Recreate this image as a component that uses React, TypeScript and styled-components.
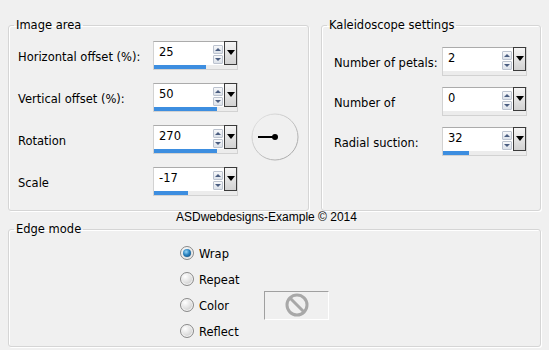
import React from "react";
import styled, { createGlobalStyle } from "styled-components";

const Global = createGlobalStyle`
  html, body { margin: 0; padding: 0; background: #f0f0f0; }
  body {
    width: 549px; height: 350px; overflow: hidden;
    font-family: "DejaVu Sans", Tahoma, sans-serif;
    font-size: 11.5px; color: #000;
  }
`;

const Window = styled.div`
  width: 549px;
  height: 350px;
  box-sizing: border-box;
  padding: 17px 0 0 8px;
  display: flex;
  flex-direction: column;
`;

const TopRow = styled.div`
  display: flex;
  gap: 12px;
  align-items: flex-start;
`;

const Group = styled.fieldset<{ $w: number; $h: number }>`
  margin: 0;
  padding: 0;
  min-width: 0;
  box-sizing: border-box;
  width: ${(p) => p.$w}px;
  height: ${(p) => p.$h}px;
  border: 1px solid #d5d5d5;
  border-radius: 3px;
  box-shadow: inset 1px 1px 0 #fff, 1px 1px 0 #fff;
`;

const Legend = styled.legend<{ $lh: number }>`
  margin-left: 5px;
  padding: 0 2px;
  line-height: ${(p) => p.$lh}px;
`;

const FormGrid = styled.div<{ $pl: number; $pt: number; $label: number; $gap: number }>`
  display: grid;
  grid-template-columns: ${(p) => p.$label}px 85px auto;
  grid-auto-rows: 29px;
  row-gap: ${(p) => p.$gap}px;
  column-gap: 0;
  padding: ${(p) => p.$pt}px 0 0 ${(p) => p.$pl}px;
  align-items: center;
`;

const Label = styled.div`
  grid-column: 1;
  line-height: 14px;
  padding-top: 3px;
  white-space: nowrap;
`;

const Spin = styled.div`
  grid-column: 2;
  box-sizing: border-box;
  width: 85px;
  height: 29px;
  border: 1px solid #d2d2d2;
  border-top-color: #ababab;
  background: #fff;
  display: grid;
  grid-template-columns: 1fr 10px 13px;
  grid-template-rows: 23px 4px;
  column-gap: 1px;
`;

const Value = styled.div`
  padding: 3px 0 0 5px;
  line-height: 14px;
`;

const Arrows = styled.div`
  display: flex;
  flex-direction: column;
  gap: 1px;
  padding-top: 3px;
`;

const ArrowBtn = styled.div<{ $up?: boolean }>`
  box-sizing: border-box;
  height: 9px;
  border: 1px solid #bcc3cf;
  border-radius: 1px;
  background: linear-gradient(#f7f8fa, #dce2ea);
  display: flex;
  align-items: center;
  justify-content: center;
  &::after {
    content: "";
    width: 0;
    height: 0;
    border-left: 3px solid transparent;
    border-right: 3px solid transparent;
    ${(p) =>
      p.$up
        ? "border-bottom: 3px solid #4a5d80;"
        : "border-top: 3px solid #4a5d80;"}
  }
`;

const Drop = styled.div`
  box-sizing: border-box;
  margin-top: -1px;
  border: 1px solid #3b3b3b;
  background: linear-gradient(#f5f5f5, #d2d2d2);
  display: flex;
  justify-content: center;
  padding-top: 8px;
  &::after {
    content: "";
    width: 0;
    height: 0;
    border-left: 4px solid transparent;
    border-right: 4px solid transparent;
    border-top: 5px solid #000;
  }
`;

const Bar = styled.div`
  grid-column: 1 / -1;
  background: #ececec;
  display: flex;
`;

const Fill = styled.div`
  height: 100%;
  background: #3d8ee0;
`;

const DialBox = styled.div`
  grid-column: 3;
  margin-left: 13px;
  margin-top: -5px;
  width: 48px;
  height: 48px;
`;

const Footer = styled.div`
  height: 11px;
  line-height: 12px;
  padding-left: 168px;
  font-family: "Liberation Sans", Arial, sans-serif;
  font-size: 12px;
  white-space: nowrap;
`;

const EdgeBody = styled.div`
  padding: 4px 0 0 171px;
  display: flex;
  flex-direction: column;
`;

const RadioRow = styled.div`
  height: 26px;
  display: flex;
  align-items: center;
`;

const RadioItem = styled.label`
  width: 84px;
  display: flex;
  align-items: center;
  gap: 5px;
`;

const RadioDot = styled.span<{ $checked?: boolean }>`
  box-sizing: border-box;
  width: 14px;
  height: 14px;
  border-radius: 50%;
  border: 1px solid #8a8a8a;
  background: radial-gradient(circle at 35% 30%, #ffffff 0%, #e4e4e4 45%, #bdbdbd 100%);
  box-shadow: inset 0 0 0 1px #f4f4f4;
  display: flex;
  align-items: center;
  justify-content: center;
  &::after {
    content: "";
    display: ${(p) => (p.$checked ? "block" : "none")};
    width: 8px;
    height: 8px;
    border-radius: 50%;
    background: radial-gradient(circle at 40% 35%, #9ad6f6 0%, #2a83c0 45%, #0a3e6a 100%);
  }
`;

const RadioText = styled.span`
  line-height: 14px;
  padding-top: 1px;
`;

const Swatch = styled.div`
  box-sizing: border-box;
  width: 65px;
  height: 29px;
  border: 1px solid #fff;
  border-top-color: #a0a0a0;
  border-left-color: #a0a0a0;
  background: #f0f0f0;
  display: flex;
  align-items: center;
  justify-content: center;
  flex-shrink: 0;
`;

type SpinProps = { value: string; fill: number };

const SpinBox = ({ value, fill }: SpinProps) => (
  <Spin>
    <Value>{value}</Value>
    <Arrows>
      <ArrowBtn $up />
      <ArrowBtn />
    </Arrows>
    <Drop />
    <Bar>
      <Fill style={{ width: fill }} />
    </Bar>
  </Spin>
);

const Dial = () => (
  <DialBox>
    <svg width="48" height="48" viewBox="0 0 48 48">
      <defs>
        <linearGradient id="dialStroke" x1="0" y1="0" x2="1" y2="1">
          <stop offset="0" stopColor="#e6e6e6" />
          <stop offset="1" stopColor="#a0a0a0" />
        </linearGradient>
      </defs>
      <circle cx="24" cy="24" r="23" fill="#f0f0f0" stroke="url(#dialStroke)" strokeWidth="1" />
      <line x1="7" y1="24" x2="24" y2="24" stroke="#000" strokeWidth="2" />
      <circle cx="24" cy="24" r="3" fill="#000" />
    </svg>
  </DialBox>
);

const NoIcon = () => (
  <svg width="26" height="26" viewBox="0 0 26 26">
    <circle cx="13" cy="13" r="10" fill="none" stroke="#a8a8a8" strokeWidth="3" />
    <line x1="6" y1="6" x2="20" y2="20" stroke="#a8a8a8" strokeWidth="3" />
  </svg>
);

const radios = [
  { label: "Wrap", checked: true },
  { label: "Repeat" },
  { label: "Color", swatch: true },
  { label: "Reflect" },
];

export default function App() {
  return (
    <>
      <Global />
      <Window>
        <TopRow>
          <Group $w={301} $h={194}>
            <Legend $lh={16}>Image area</Legend>
            <FormGrid $pl={9} $pt={8} $label={135} $gap={13}>
              <Label>Horizontal offset (%):</Label>
              <SpinBox value="25" fill={52} />
              <Label>Vertical offset (%):</Label>
              <SpinBox value="50" fill={63} />
              <Label>Rotation</Label>
              <SpinBox value="270" fill={63} />
              <Dial />
              <Label>Scale</Label>
              <SpinBox value="-17" fill={34} />
            </FormGrid>
          </Group>
          <Group $w={220} $h={194}>
            <Legend $lh={16}>Kaleidoscope settings</Legend>
            <FormGrid $pl={12} $pt={14} $label={108} $gap={11}>
              <Label>Number of petals:</Label>
              <SpinBox value="2" fill={0} />
              <Label>Number of</Label>
              <SpinBox value="0" fill={0} />
              <Label>Radial suction:</Label>
              <SpinBox value="32" fill={26} />
            </FormGrid>
          </Group>
        </TopRow>
        <Footer>ASDwebdesigns-Example © 2014</Footer>
        <Group $w={533} $h={125}>
          <Legend $lh={14}>Edge mode</Legend>
          <EdgeBody>
            {radios.map((r) => (
              <RadioRow key={r.label}>
                <RadioItem>
                  <RadioDot $checked={r.checked} />
                  <RadioText>{r.label}</RadioText>
                </RadioItem>
                {r.swatch && (
                  <Swatch>
                    <NoIcon />
                  </Swatch>
                )}
              </RadioRow>
            ))}
          </EdgeBody>
        </Group>
      </Window>
    </>
  );
}
